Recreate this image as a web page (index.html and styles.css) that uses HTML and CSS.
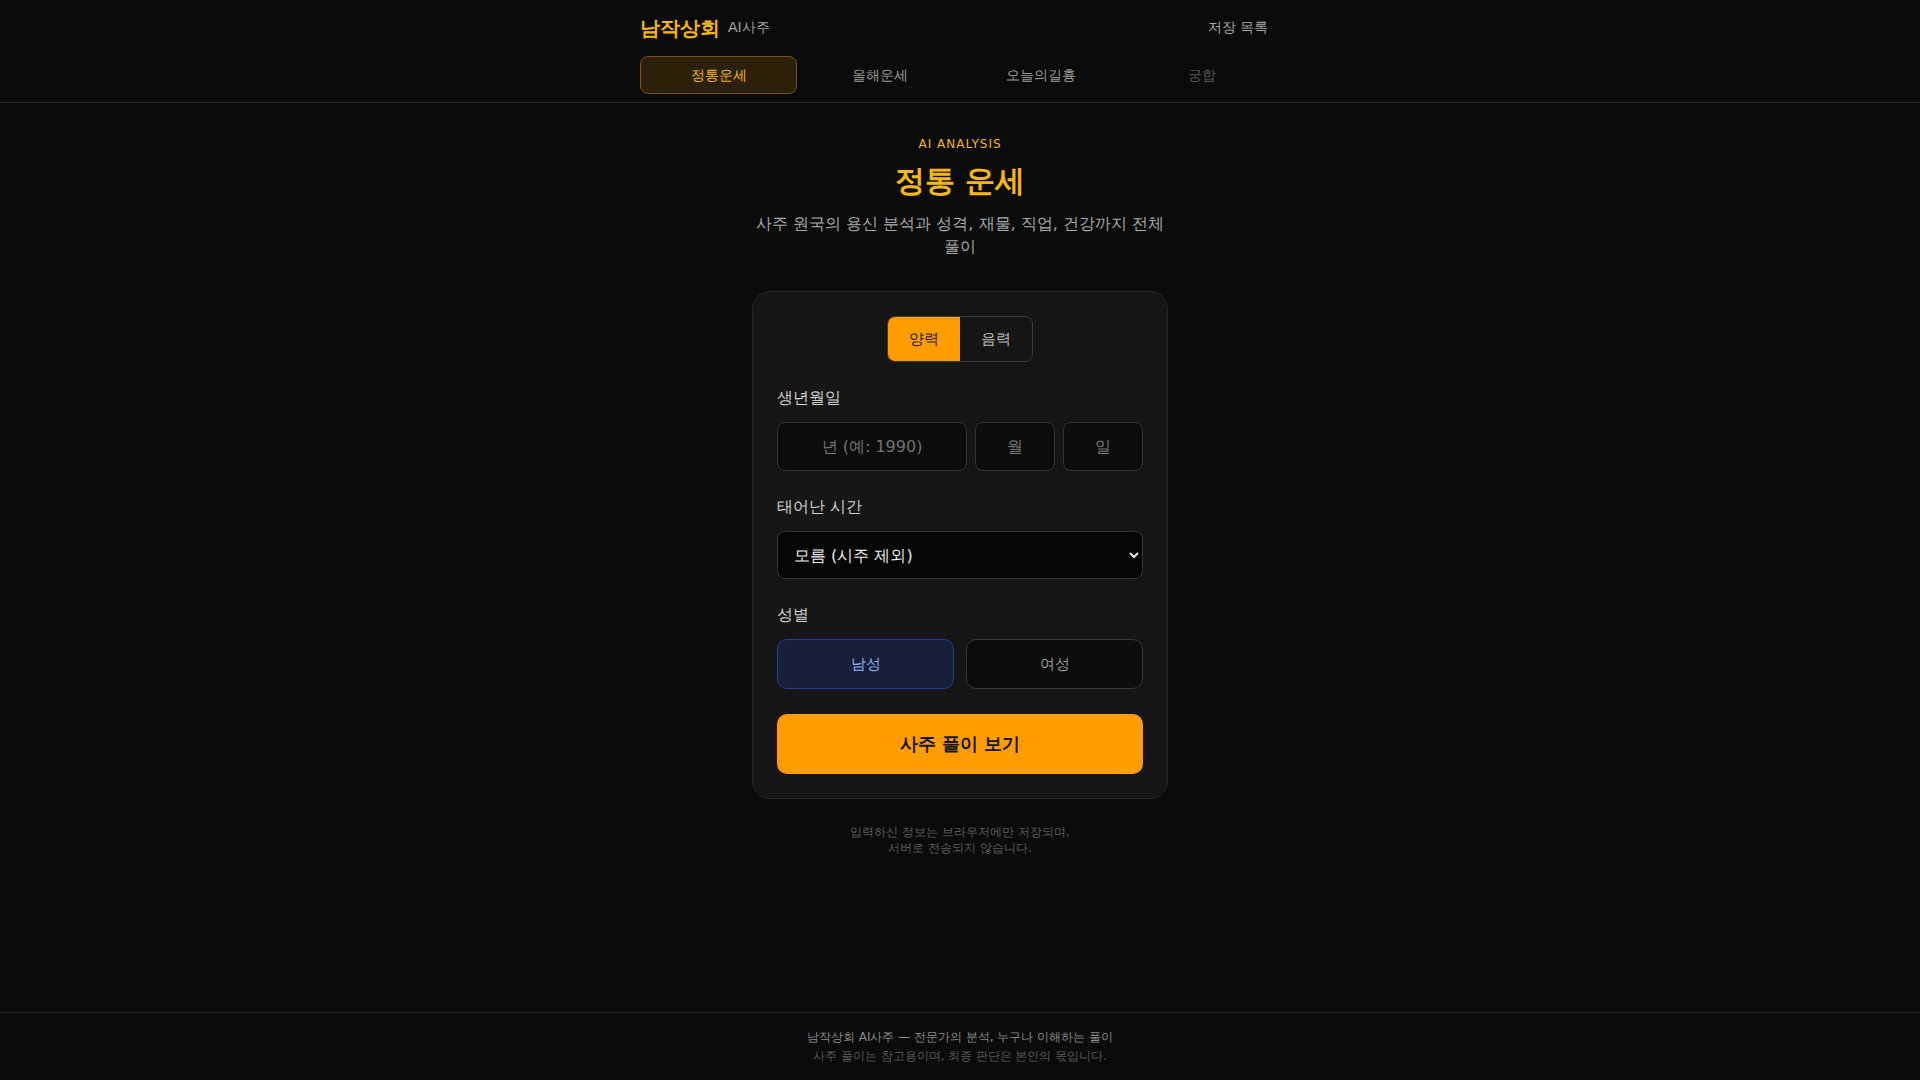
FILE: index.html
```html
<!DOCTYPE html>
<html lang="ko">
    <head>
        <meta charset="UTF-8"/>
        <meta name="viewport" content="width=device-width, initial-scale=1.0"/>
        <title>남작상회 AI사주 - 정통 운세</title>
        <link rel="stylesheet" href="styles.css">
    </head>
    <body>
        <header class="site-header">
            <div class="header-inner">
                <div class="top-row">
                    <a class="brand" href="#">
                        <span class="brand-name">남작상회</span>
                        <span class="brand-sub">AI사주</span>
                    </a>
                    <button class="saved-btn">저장 목록</button>
                </div>
                <nav class="tabs">
                    <a href="#" class="tab active">정통운세</a>
                    <a href="#" class="tab">올해운세</a>
                    <a href="#" class="tab">오늘의길흉</a>
                    <a href="#" class="tab disabled">궁합</a>
                </nav>
            </div>
        </header>

        <main class="main">
            <section class="intro">
                <p class="eyebrow">AI ANALYSIS</p>
                <h1 class="title">정통 운세</h1>
                <p class="desc">사주 원국의 용신 분석과 성격, 재물, 직업, 건강까지 전체 풀이</p>
            </section>

            <form class="card" onsubmit="return false;">
                <div class="calendar-toggle">
                    <button type="button" class="cal-btn selected">양력</button>
                    <button type="button" class="cal-btn">음력</button>
                </div>

                <div class="field">
                    <label class="field-label" for="year">생년월일</label>
                    <div class="date-row">
                        <input type="text" id="year" class="input year" placeholder="년 (예: 1990)">
                        <input type="text" id="month" class="input small" placeholder="월">
                        <input type="text" id="day" class="input small" placeholder="일">
                    </div>
                </div>

                <div class="field">
                    <label class="field-label" for="hour">태어난 시간</label>
                    <select id="hour" class="select">
                        <option>모름 (시주 제외)</option>
                        <option>자시 (23:30 ~ 01:29)</option>
                        <option>축시 (01:30 ~ 03:29)</option>
                        <option>인시 (03:30 ~ 05:29)</option>
                    </select>
                </div>

                <div class="field">
                    <span class="field-label">성별</span>
                    <div class="gender-row">
                        <button type="button" class="gender-btn selected">남성</button>
                        <button type="button" class="gender-btn">여성</button>
                    </div>
                </div>

                <button type="submit" class="submit-btn">사주 풀이 보기</button>
            </form>

            <p class="privacy">입력하신 정보는 브라우저에만 저장되며,<br>서버로 전송되지 않습니다.</p>
        </main>

        <footer class="footer">
            <p class="footer-main">남작상회 AI사주 — 전문가의 분석, 누구나 이해하는 풀이</p>
            <p class="footer-sub">사주 풀이는 참고용이며, 최종 판단은 본인의 몫입니다.</p>
        </footer>
    </body>
</html>
```

FILE: styles.css
```css
* {
    box-sizing: border-box;
}

body {
    margin: 0;
    min-height: 100vh;
    display: flex;
    flex-direction: column;
    background: #0b0b0b;
    color: #e5e5e5;
    font-family: "DejaVu Sans", sans-serif;
}

p, h1 {
    margin: 0;
}

button, input, select {
    font-family: inherit;
}

/* header */
.site-header {
    border-bottom: 1px solid #222;
}

.header-inner {
    width: 640px;
    margin: 0 auto;
    padding: 13px 0 8px;
}

.top-row {
    display: flex;
    align-items: center;
    justify-content: space-between;
    height: 30px;
}

.brand {
    display: flex;
    align-items: center;
    gap: 8px;
    text-decoration: none;
}

.brand-name {
    font-size: 20px;
    font-weight: 700;
    color: #f6b70e;
}

.brand-sub {
    font-size: 14px;
    color: #a3a3a3;
}

.saved-btn {
    background: none;
    border: none;
    color: #a8a8a8;
    font-size: 14px;
    padding: 4px 12px;
}

.tabs {
    display: grid;
    grid-template-columns: repeat(4, 1fr);
    gap: 4px;
    margin-top: 13px;
}

.tab {
    display: flex;
    align-items: center;
    justify-content: center;
    height: 38px;
    padding-top: 1px;
    border: 1px solid transparent;
    border-radius: 8px;
    font-size: 14px;
    color: #9a9a9a;
    text-decoration: none;
}

.tab.active {
    background: #2c2108;
    border-color: #785309;
    color: #f6b70e;
}

.tab.disabled {
    color: #555;
}

/* main */
.main {
    flex: 1;
    display: flex;
    flex-direction: column;
    align-items: center;
    padding-top: 33px;
}

.intro {
    width: 416px;
    text-align: center;
}

.eyebrow {
    font-size: 12px;
    line-height: 16px;
    letter-spacing: 1px;
    color: #f6b70e;
}

.title {
    margin-top: 9px;
    font-size: 30px;
    line-height: 40px;
    font-weight: 700;
    color: #f6b70e;
}

.desc {
    margin-top: 11px;
    font-size: 16px;
    line-height: 23px;
    color: #a8a8a8;
}

.card {
    width: 416px;
    margin-top: 33px;
    padding: 24px;
    background: #161616;
    border: 1px solid #272727;
    border-radius: 18px;
}

.calendar-toggle {
    display: flex;
    width: 146px;
    margin: 0 auto;
    border: 1px solid #3a3a3a;
    border-radius: 8px;
    overflow: hidden;
}

.cal-btn {
    flex: 1;
    height: 44px;
    border: none;
    background: #161616;
    color: #bdbdbd;
    font-size: 15px;
}

.cal-btn.selected {
    background: #ff9d00;
    color: #1a1a1a;
}

.field {
    margin-top: 25px;
}

.field-label {
    display: block;
    margin-bottom: 13px;
    font-size: 16px;
    line-height: 22px;
    color: #d0d0d0;
}

.date-row {
    display: flex;
    gap: 8px;
}

.input {
    height: 49px;
    background: #0d0d0d;
    border: 1px solid #333;
    border-radius: 8px;
    color: #e5e5e5;
    font-size: 16px;
    text-align: center;
}

.input::placeholder {
    color: #737373;
}

.input.year {
    flex: 1;
    min-width: 0;
}

.input.small {
    width: 80px;
}

.select {
    width: 100%;
    height: 48px;
    padding: 0 8px 0 12px;
    background: #060606;
    border: 1px solid #333;
    border-radius: 8px;
    color: #ececec;
    font-size: 16px;
    color-scheme: dark;
}

.gender-row {
    display: grid;
    grid-template-columns: 1fr 1fr;
    gap: 12px;
}

.gender-btn {
    height: 50px;
    background: #0d0d0d;
    border: 1px solid #383838;
    border-radius: 10px;
    color: #9a9a9a;
    font-size: 15px;
}

.gender-btn.selected {
    background: #172038;
    border-color: #1f3d99;
    color: #8fb0ee;
}

.submit-btn {
    display: block;
    width: 100%;
    height: 60px;
    margin-top: 25px;
    background: #ff9d00;
    border: none;
    border-radius: 10px;
    color: #161616;
    font-size: 18px;
    font-weight: 700;
}

.privacy {
    margin-top: 25px;
    font-size: 12px;
    line-height: 16px;
    color: #5c5c5c;
    text-align: center;
}

/* footer */
.footer {
    border-top: 1px solid #222;
    padding: 15px 0;
    text-align: center;
    line-height: 18px;
}

.footer-main {
    font-size: 12px;
    color: #8a8a8a;
}

.footer-sub {
    margin-top: 1px;
    font-size: 11.5px;
    color: #585858;
}
```
